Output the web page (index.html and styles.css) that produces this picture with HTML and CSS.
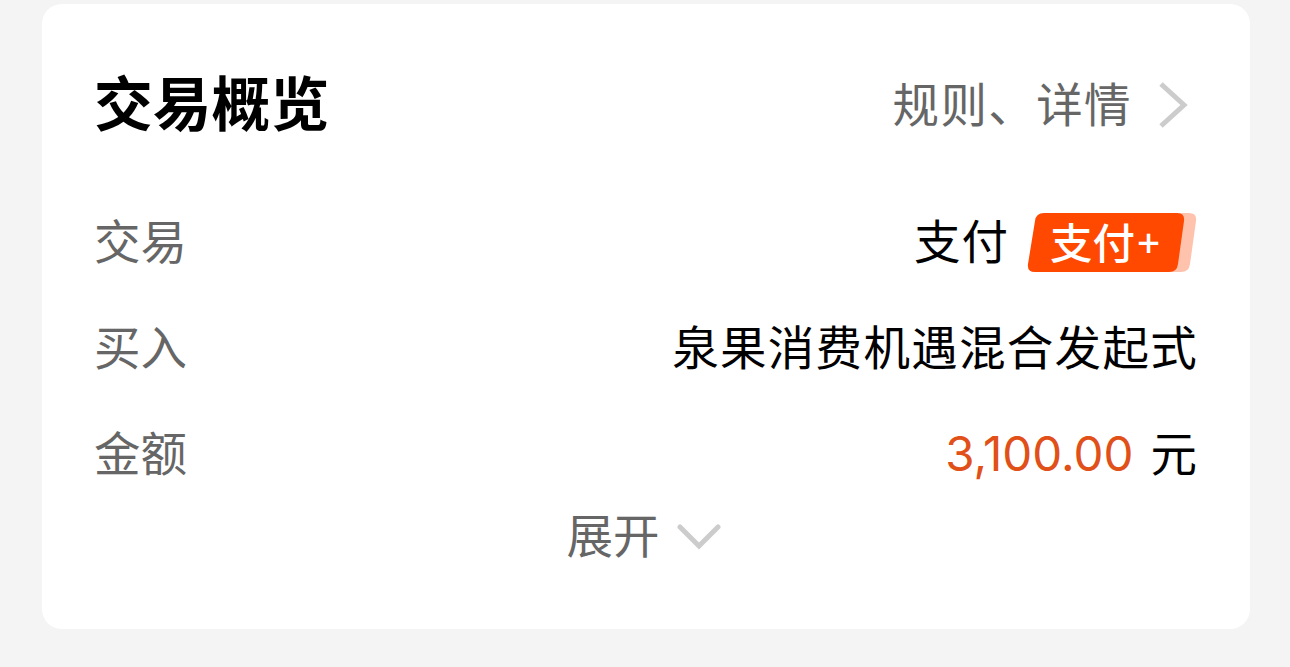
FILE: index.html
```html
<!DOCTYPE html>
<html lang="zh-CN">
<head>
    <meta charset="UTF-8">
    <title>交易概览</title>
    <link rel="stylesheet" href="styles.css">
</head>
<body>
    <div class="card">
        <div class="card-header">
            <h1>交易概览</h1>
            <a class="details">
                <span>规则、详情</span>
                <svg class="arrow-right" width="30" height="48" viewBox="0 0 30 48">
                    <path d="M2 3 L25 24 L2 45"/>
                </svg>
            </a>
        </div>

        <div class="row">
            <span class="label">交易</span>
            <span class="value">
                <span class="text pay">支付</span>
                <span class="badge">
                    <svg class="badge-bg" width="170" height="60" viewBox="0 0 170 60">
                        <path class="badge-shadow" d="M20 1 H162 Q170 1 169 9 L163 52 Q162 60 154 60 H20 Z"/>
                        <path class="badge-front" d="M17 1 H150 Q158 1 157 9 L151 52 Q150 60 142 60 H8 Q0 60 1 52 L8 9 Q9 1 17 1 Z"/>
                    </svg>
                    <span class="badge-text">支付<span class="plus">+</span></span>
                </span>
            </span>
        </div>

        <div class="row">
            <span class="label">买入</span>
            <span class="value"><span class="text fund">泉果消费机遇混合发起式</span></span>
        </div>

        <div class="row">
            <span class="label">金额</span>
            <span class="value"><span class="amount">3,100.00</span><span class="text unit">元</span></span>
        </div>

        <div class="expand">
            <span>展开</span>
            <svg class="arrow-down" width="44" height="28" viewBox="0 0 44 28">
                <path d="M3 4 L22 23 L41 4"/>
            </svg>
        </div>
    </div>
</body>
</html>
```
FILE: styles.css
```css
* {
    margin: 0;
    padding: 0;
    box-sizing: border-box;
}

body {
    background: #f4f4f4;
    padding: 4px 40px 0 42px;
    font-family: Inter, "Noto Sans CJK SC", sans-serif;
    font-size: 46px;
    color: #000;
    overflow: hidden;
}

.card {
    height: 625px;
    background: #fff;
    border-radius: 20px;
    padding: 48px 53px 0 52px;
}

.card-header {
    display: flex;
    justify-content: space-between;
    align-items: center;
    height: 106px;
}

h1 {
    font-size: 58.8px;
    font-weight: 700;
    line-height: 106px;
}

.details {
    display: flex;
    align-items: center;
    gap: 27px;
    padding-right: 8px;
    color: #666;
    letter-spacing: 1.4px;
}

.details span {
    font-size: 46.5px;
    padding-bottom: 7px;
}

.row {
    display: flex;
    justify-content: space-between;
    align-items: center;
    height: 106px;
}

.card-header + .row {
    margin-top: 31px;
}

.label {
    color: #666;
    font-size: 46.5px;
    padding-bottom: 8px;
}

.value {
    display: flex;
    align-items: center;
}

.text {
    font-size: 46.5px;
    padding-bottom: 7px;
}

.pay {
    letter-spacing: 1px;
}

.fund {
    letter-spacing: 1.3px;
    margin-right: -1px;
}

.badge {
    position: relative;
    width: 170px;
    height: 60px;
    margin-left: 18px;
}

.badge-bg {
    display: block;
}

.badge-front {
    fill: #ff4800;
}

.badge-shadow {
    fill: #ffc2ac;
}

.badge-text {
    position: absolute;
    top: 2px;
    left: 23px;
    line-height: 60px;
    font-size: 42.5px;
    font-weight: 500;
    color: #fff;
    white-space: nowrap;
}

.plus {
    position: relative;
    top: -4px;
    font-size: 41px;
    font-weight: 400;
}

.amount {
    color: #e05018;
    font-size: 47.5px;
    padding-bottom: 2px;
}

.unit {
    margin-left: 17px;
}

.expand {
    display: flex;
    justify-content: center;
    align-items: center;
    gap: 17px;
    height: 60px;
    padding-right: 4px;
    color: #666;
}

.expand span {
    font-size: 46.5px;
    padding-bottom: 10px;
}

svg {
    flex: none;
}

.arrow-right path,
.arrow-down path {
    fill: none;
    stroke: #ccc;
    stroke-width: 5;
}

.arrow-down path {
    stroke-linecap: round;
}
```
